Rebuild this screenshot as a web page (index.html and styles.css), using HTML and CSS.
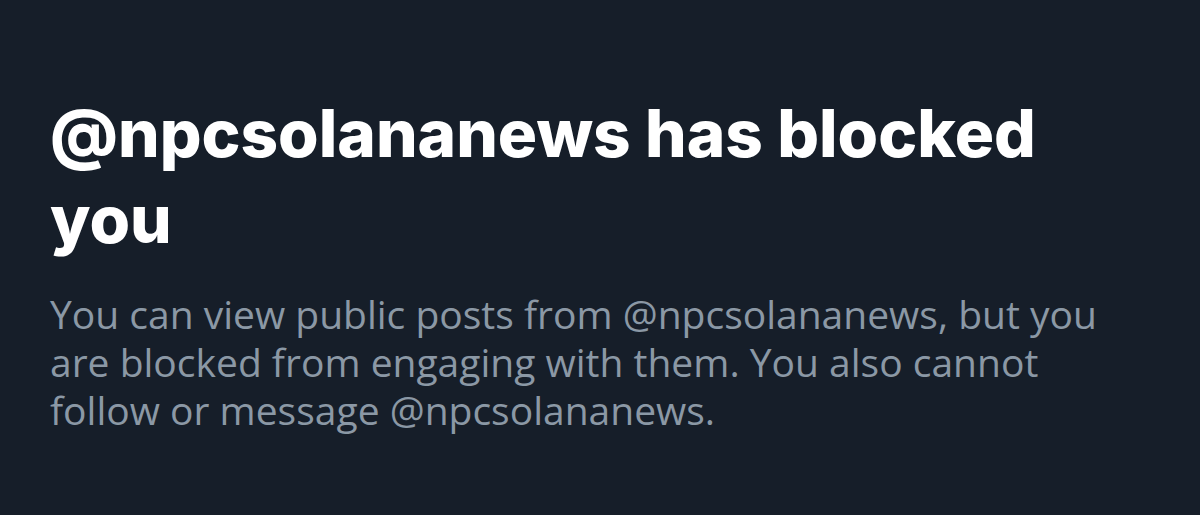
FILE: index.html
```html
<!DOCTYPE html>
<html>
<head>
    <title>Blocked</title>
    <link rel="stylesheet" href="styles.css">
</head>
<body>
    <div class="notice">
        <h1 class="title">@npcsolananews has blocked you</h1>
        <p class="text">You can view public posts from @npcsolananews, but you are blocked from engaging with them. You also cannot follow or message @npcsolananews.</p>
    </div>
</body>
</html>
```

FILE: styles.css
```css
body{
    margin:0;
    background:#161e29;
    height:515px;
}
.notice{
    padding:90px 50px 0 50px;
    width:1080px;
}
.title{
    margin:0;
    width:1020px;
    font-family:Inter, "Liberation Sans", sans-serif;
    font-weight:800;
    font-size:65.6px;
    line-height:86px;
    color:#ffffff;
}
.text{
    margin:28px 0 0 0;
    font-family:"Open Sans", sans-serif;
    font-weight:400;
    font-size:39px;
    line-height:48px;
    color:#8b98a5;
}
```
